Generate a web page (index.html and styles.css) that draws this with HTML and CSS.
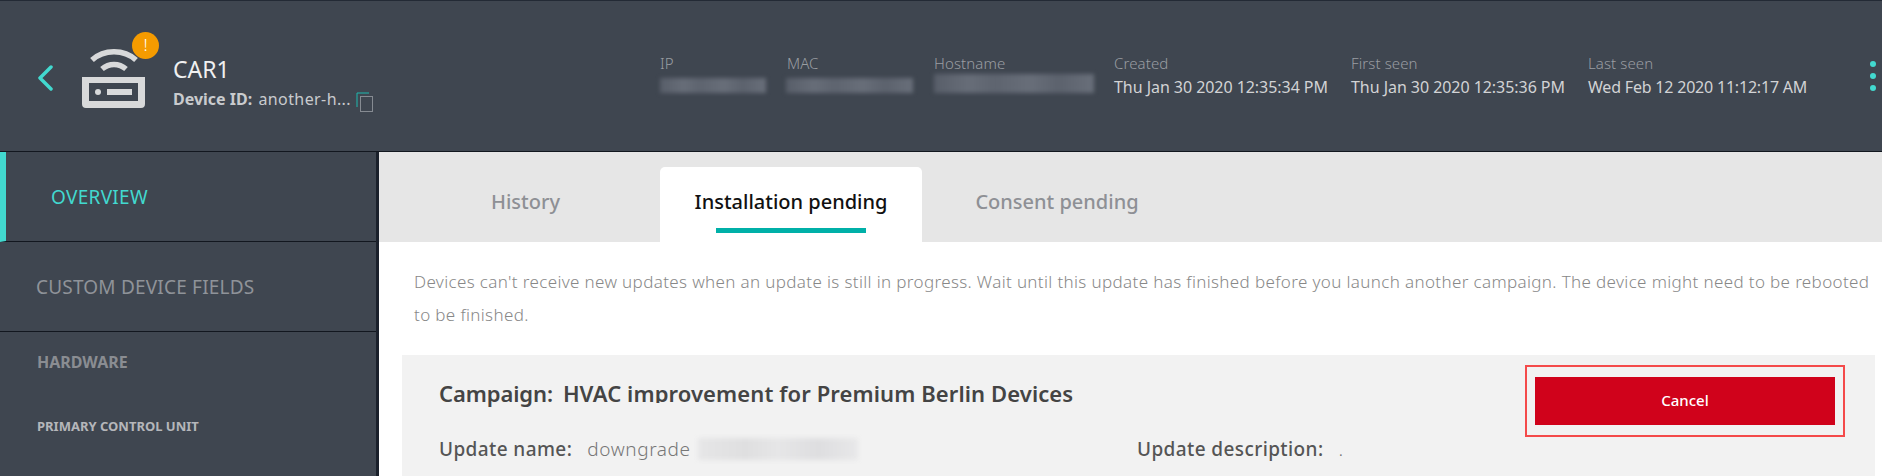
FILE: index.html
```html
<!DOCTYPE html>
<html>

<head>
  <meta charset="utf-8">
  <title>CAR1</title>
  <link rel="stylesheet" href="styles.css">
</head>

<body>
  <header class="device-header">
    <svg class="back" width="16" height="26" viewBox="0 0 16 26">
      <path d="M14 2 L3 13 L14 24" fill="none" stroke="#42d9cf" stroke-width="3.5" stroke-linecap="round" stroke-linejoin="round"/>
    </svg>

    <div class="device-icon">
      <svg width="64" height="64" viewBox="0 0 64 64">
        <path d="M10 15 C22 4 42 4 54 15" fill="none" stroke="#d8d9da" stroke-width="5.5"/>
        <path d="M20 24 C27 18 37 18 44 24" fill="none" stroke="#d8d9da" stroke-width="5.5"/>
        <path fill-rule="evenodd" fill="#d8d9da" d="M0 32 H63 V59 Q63 63 59 63 H4 Q0 63 0 59 Z M7 38 V56 H56 V38 Z"/>
        <circle cx="16" cy="47" r="3" fill="#d8d9da"/>
        <rect x="25" y="44" width="25" height="6" fill="#d8d9da"/>
      </svg>
      <div class="alert-badge">!</div>
    </div>

    <div class="device-name">
      <div class="name">CAR1</div>
      <div class="device-id">
        <b>Device ID:</b> <span class="id-value">another-h...</span>
        <svg class="copy" width="17" height="20" viewBox="0 0 17 20">
          <path d="M1 15 V1 H13" fill="none" stroke="#1fb8ae" stroke-width="1"/>
          <rect x="4.5" y="4.5" width="12" height="15" fill="none" stroke="#868b92" stroke-width="1"/>
        </svg>
      </div>
    </div>

    <div class="meta">
      <div class="meta-col col-ip">
        <label>IP</label>
        <div class="redacted red-ip"></div>
      </div>
      <div class="meta-col col-mac">
        <label>MAC</label>
        <div class="redacted red-mac"></div>
      </div>
      <div class="meta-col col-host">
        <label>Hostname</label>
        <div class="redacted red-host"></div>
      </div>
      <div class="meta-col col-created">
        <label>Created</label>
        <div class="value">Thu Jan 30 2020 12:35:34 PM</div>
      </div>
      <div class="meta-col col-first">
        <label>First seen</label>
        <div class="value">Thu Jan 30 2020 12:35:36 PM</div>
      </div>
      <div class="meta-col col-last">
        <label>Last seen</label>
        <div class="value">Wed Feb 12 2020 11:12:17 AM</div>
      </div>
    </div>

    <div class="dots"><i></i><i></i><i></i></div>
  </header>

  <div class="page">
    <nav class="sidebar">
      <div class="nav-item active">OVERVIEW</div>
      <div class="nav-item">CUSTOM DEVICE FIELDS</div>
      <div class="nav-group">HARDWARE</div>
      <div class="nav-sub">PRIMARY CONTROL UNIT</div>
    </nav>

    <main class="content">
      <div class="tabs">
        <div class="tab tab-history">History</div>
        <div class="tab tab-active">Installation pending</div>
        <div class="tab tab-consent">Consent pending</div>
      </div>

      <p class="notice">Devices can't receive new updates when an update is still in progress. Wait until this update has finished before you launch another campaign. The device might need to be rebooted to be finished.</p>

      <section class="campaign">
        <div class="campaign-info">
          <h2><span class="campaign-label">Campaign:</span> <span class="campaign-name">HVAC improvement for Premium Berlin Devices</span></h2>
          <div class="fields">
            <div class="field field-name">
              <b>Update name:</b>
              <span class="field-value">downgrade</span>
              <div class="redacted red-update"></div>
            </div>
            <div class="field">
              <b>Update description:</b>
              <span class="field-value">.</span>
            </div>
          </div>
        </div>
        <div class="cancel-outline">
          <button class="cancel">Cancel</button>
        </div>
      </section>
    </main>
  </div>
</body>

</html>
```

FILE: styles.css
```css
html, body {
  margin: 0;
  padding: 0;
  width: 1882px;
  height: 476px;
  overflow: hidden;
  background: #fff;
  font-family: "Noto Sans", "Open Sans", sans-serif;
}

.device-header {
  display: flex;
  height: 150px;
  background: #3f4650;
  border-top: 1px solid #232a35;
  border-bottom: 1px solid #12171f;
  color: #d8d9da;
}

.back {
  margin: 64px 0 0 37px;
}

.device-icon {
  position: relative;
  width: 64px;
  margin: 44px 0 0 29px;
}

.alert-badge {
  position: absolute;
  left: 50px;
  top: -13px;
  width: 27px;
  height: 27px;
  border-radius: 50%;
  background: #f59b00;
  color: #fff;
  font-size: 17px;
  font-weight: 300;
  line-height: 26px;
  text-align: center;
}

.device-name {
  margin: 53px 0 0 27px;
  width: 487px;
}

.name {
  font-size: 23px;
  line-height: 30px;
  color: #f0f0f0;
}

.device-id {
  font-size: 16px;
  line-height: 24px;
  margin-top: 3px;
  color: #c9cbce;
}

.id-value {
  margin-left: 2px;
  letter-spacing: 0.4px;
}

.copy {
  vertical-align: -7px;
  margin-left: 1px;
}

.meta {
  display: flex;
  margin-top: 51px;
}

.meta-col label {
  display: block;
  font-size: 15px;
  line-height: 22px;
  letter-spacing: 0.1px;
  font-weight: 300;
  color: #9a9da2;
}

.value {
  font-size: 16px;
  line-height: 24px;
  margin-top: 1px;
  letter-spacing: -0.05px;
  color: #d2d3d5;
  white-space: nowrap;
}

.col-last .value {
  letter-spacing: -0.2px;
}

.col-ip { width: 127px; }
.col-mac { width: 147px; }
.col-host { width: 180px; }
.col-created { width: 237px; }
.col-first { width: 237px; }
.col-last { width: 282px; }

.redacted {
  background: linear-gradient(90deg, #585e69, #676d78 22%, #5e646f 38%, #686e79 60%, #5c626d 78%, #696f7a);
  filter: blur(2px);
}

.red-ip { width: 106px; height: 15px; margin: 4px 0 0 0; }
.red-mac { width: 127px; height: 15px; margin: 4px 0 0 -1px; }
.red-host { width: 160px; height: 19px; margin: 0; }

.dots {
  display: flex;
  flex-direction: column;
  gap: 6px;
  margin-top: 60px;
}

.dots i {
  width: 6px;
  height: 6px;
  border-radius: 50%;
  background: #42d9cf;
}

.page {
  display: flex;
  height: 324px;
}

.sidebar {
  width: 376px;
  background: #3f4650;
  border-right: 3px solid #1a202b;
  flex: none;
}

.nav-item {
  height: 89px;
  line-height: 91px;
  padding-left: 36px;
  font-size: 19px;
  letter-spacing: 0.2px;
  color: #8f9399;
  border-bottom: 1px solid #12171f;
}

.nav-item.active {
  padding-left: 45px;
  border-left: 6px solid #42d9cf;
  color: #42d9cf;
  letter-spacing: 0.3px;
}

.nav-group {
  margin: 19px 0 0 37px;
  font-size: 16px;
  line-height: 22px;
  font-weight: 700;
  color: #8a8d92;
}

.nav-sub {
  margin: 43px 0 0 37px;
  font-size: 13px;
  line-height: 20px;
  font-weight: 700;
  color: #b5b6ba;
}

.content {
  display: flex;
  flex-direction: column;
  flex: 1;
  min-width: 0;
}

.tabs {
  display: flex;
  flex: none;
  height: 75px;
  padding-top: 15px;
  background: #e6e6e6;
}

.tab {
  text-align: center;
  line-height: 70px;
  font-size: 20px;
  font-weight: 500;
  color: #8e9095;
}

.tab-history { width: 269px; padding-left: 12px; }
.tab-consent { width: 270px; }

.tab-active {
  position: relative;
  width: 262px;
  color: #111;
  background: #fff;
  border-radius: 5px 5px 0 0;
}

.tab-active::after {
  content: "";
  position: absolute;
  left: 56px;
  bottom: 9px;
  width: 150px;
  height: 5px;
  background: #00b0a8;
}

.notice {
  margin: 23px 2px 0 35px;
  font-size: 17px;
  line-height: 33px;
  letter-spacing: 0.36px;
  font-weight: 300;
  color: #888;
}

.campaign {
  display: flex;
  flex: 1;
  justify-content: space-between;
  min-height: 0;
  margin: 24px 7px 0 23px;
  background: #f2f2f2;
}

.campaign-info {
  padding: 21px 0 0 37px;
  width: 1050px;
}

.campaign h2 {
  display: flex;
  gap: 10px;
  margin: 0;
  font-size: 22px;
  line-height: 34px;
  font-weight: 600;
  color: #444;
}

.campaign-label {
  letter-spacing: -0.1px;
}

.campaign-name {
  height: 27px;
  overflow: hidden;
  letter-spacing: 0.1px;
}

.fields {
  display: flex;
  margin-top: 25px;
}

.field {
  display: flex;
  align-items: center;
  font-size: 19px;
  line-height: 28px;
  letter-spacing: 0.4px;
  color: #555;
}

.field b {
  font-weight: 500;
}

.field-name {
  width: 698px;
}

.field-value {
  margin-left: 15px;
  font-weight: 300;
  letter-spacing: 0.6px;
  color: #777;
}

.red-update {
  width: 160px;
  height: 22px;
  margin-left: 7px;
  background: linear-gradient(90deg, #e6e6e7, #dfdfe0 30%, #e6e6e7 50%, #dedee0 75%, #e8e8e9);
}

.cancel-outline {
  box-sizing: border-box;
  width: 320px;
  height: 72px;
  margin: 10px 30px 0 0;
  padding: 10px 8px;
  border: 2px solid #f44a4a;
}

.cancel {
  display: block;
  width: 100%;
  height: 48px;
  padding: 0 0 2px;
  border: 0;
  background: #d0021b;
  color: #fff;
  font-family: inherit;
  font-size: 15px;
  font-weight: 500;
}
```
